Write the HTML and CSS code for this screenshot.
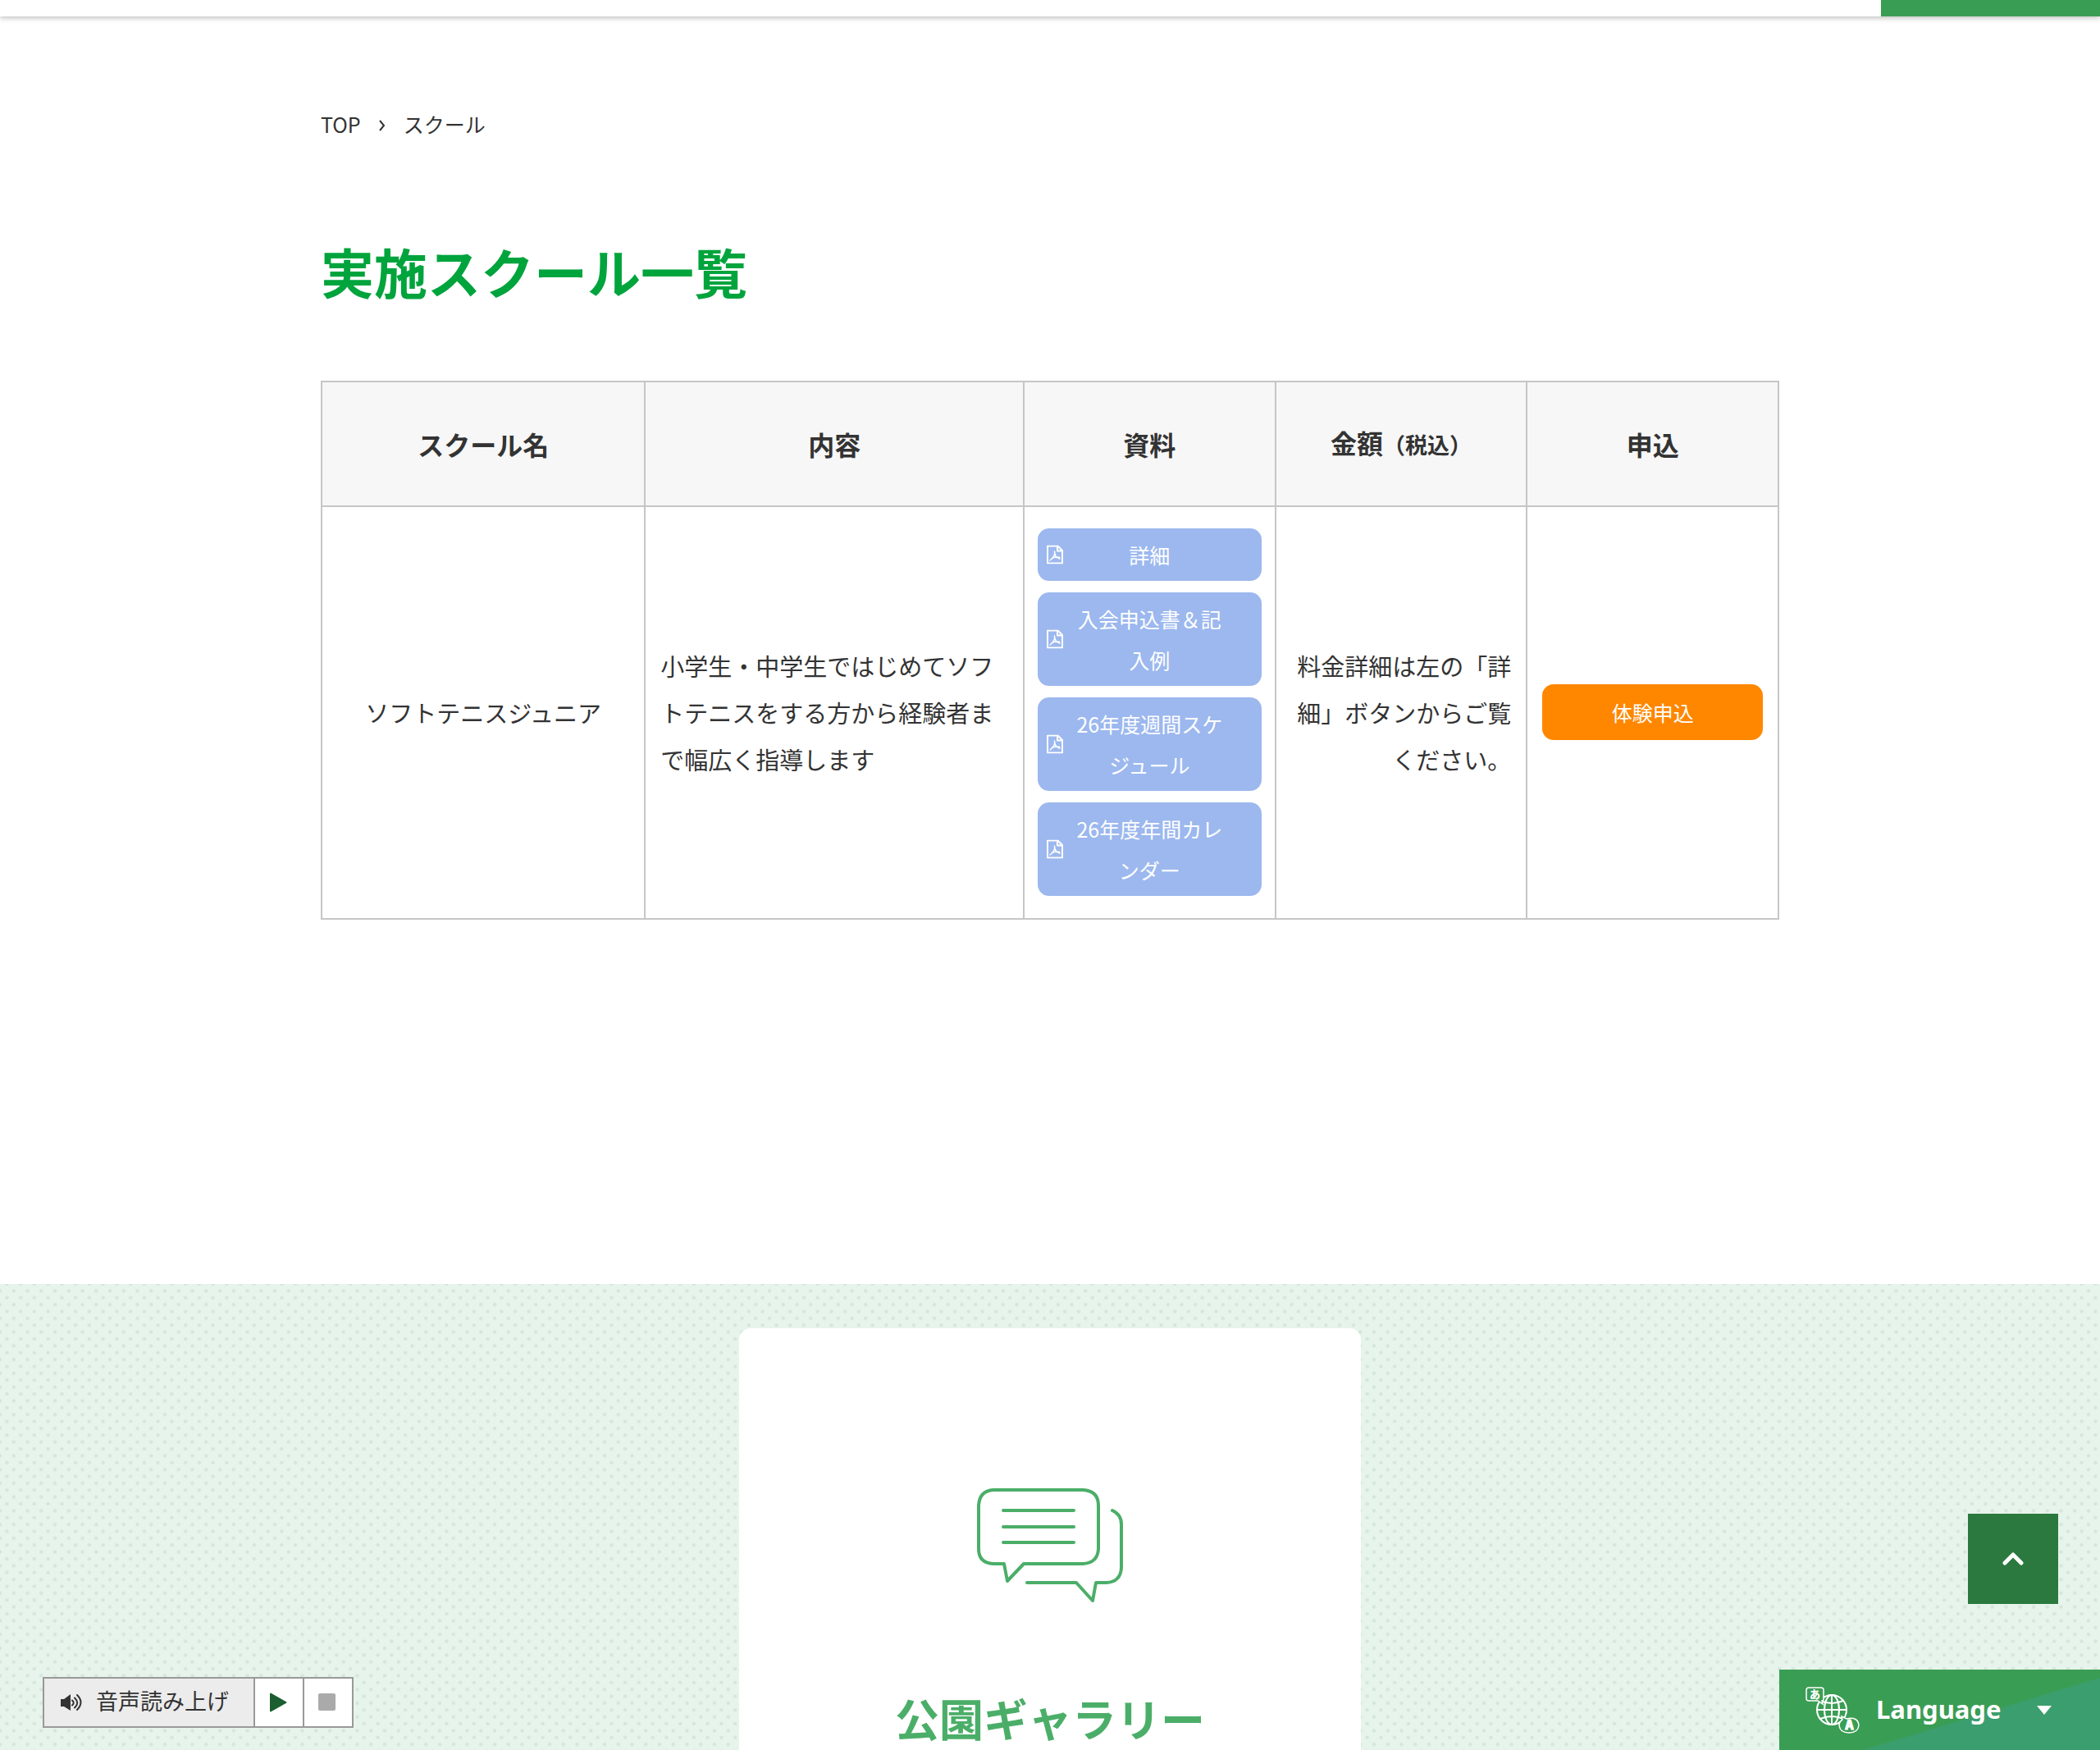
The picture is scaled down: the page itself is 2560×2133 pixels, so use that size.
FILE: index.html
```
<!DOCTYPE html>
<html lang="ja">
<head>
    <meta charset="UTF-8">
    <meta name="viewport" content="width=device-width, initial-scale=1.0">
    <title>スクール</title>
    <link rel="stylesheet" href="styles.css">
</head>
<body>
    <svg class="symbols" aria-hidden="true">
        <symbol id="icon-pdf" viewBox="0 0 20 23">
            <path d="M1 1h12.500l5.500 5.500V22H1z M13 1v6h6" fill="none" stroke="currentColor" stroke-width="2" stroke-linejoin="round"/>
            <path d="M9.500 7.500c.8 3-1 7.500-5.500 11 M9.500 8c.2 4 2.500 7.500 6.500 8.500 M6.500 16c2.500-1.500 5.500-2 9-1.200" fill="none" stroke="currentColor" stroke-width="1.500" stroke-linecap="round"/>
        </symbol>
    </svg>

    <header class="header">
        <div class="header-menu"></div>
    </header>

    <main class="main">
        <nav class="breadcrumb" aria-label="パンくず">
            <a href="#">TOP</a>
            <svg class="breadcrumb-arrow" viewBox="0 0 8 14" aria-hidden="true"><path d="M1 1l5 6-5 6"/></svg>
            <span>スクール</span>
        </nav>

        <h1 class="title">実施スクール一覧</h1>

        <table class="school">
            <thead>
                <tr>
                    <th class="col-name">スクール名</th>
                    <th class="col-text">内容</th>
                    <th>資料</th>
                    <th>金額<span class="tax">（税込）</span></th>
                    <th>申込</th>
                </tr>
            </thead>
            <tbody>
                <tr>
                    <td class="center">ソフトテニスジュニア</td>
                    <td>小学生・中学生ではじめてソフトテニスをする方から経験者まで幅広く指導します</td>
                    <td class="files-cell">
                        <div class="files">
                            <a class="btn btn-pdf" href="#"><svg aria-hidden="true"><use href="#icon-pdf"/></svg>詳細</a>
                            <a class="btn btn-pdf" href="#"><svg aria-hidden="true"><use href="#icon-pdf"/></svg>入会申込書＆記入例</a>
                            <a class="btn btn-pdf" href="#"><svg aria-hidden="true"><use href="#icon-pdf"/></svg>26年度週間スケジュール</a>
                            <a class="btn btn-pdf" href="#"><svg aria-hidden="true"><use href="#icon-pdf"/></svg>26年度年間カレンダー</a>
                        </div>
                    </td>
                    <td class="right">料金詳細は左の「詳細」ボタンからご覧ください。</td>
                    <td><a class="btn btn-apply" href="#">体験申込</a></td>
                </tr>
            </tbody>
        </table>
    </main>

    <section class="gallery">
        <a class="card" href="#">
            <svg class="card-icon" viewBox="0 0 178 139" aria-hidden="true">
                <path d="M20 2H129Q148 3 148 21V74Q147 91 129 92H57L37 113L33 92H20Q2 91 2 74V21Q3 3 20 2z"/>
                <path d="M32 27h86M32 47h86M32 66h86M165 27Q176 32 176 44V97Q175 114 158 115H145L141 137L121 115H61"/>
            </svg>
            <h2 class="card-title">公園ギャラリー</h2>
        </a>
    </section>

    <div class="voice">
        <span class="voice-label">
            <svg class="voice-icon" viewBox="0 0 27 22" aria-hidden="true">
                <path d="M0 7h4l8-6v20l-8-5H0z" fill="currentColor"/>
                <path d="M14 8.500q3.500 3 0 6M17 5.500q6.500 6 0 12M20 2q9 9 0 18" fill="none" stroke="currentColor" stroke-width="2" stroke-linecap="round"/>
            </svg>
            <span class="voice-text">音声読み上げ</span>
        </span>
        <button class="voice-btn" type="button" aria-label="再生">
            <svg viewBox="0 0 24 24"><path d="M2 1.500v21L20.500 12z" fill="#1b5e30" stroke="#1b5e30" stroke-width="2" stroke-linejoin="round"/></svg>
        </button>
        <button class="voice-btn" type="button" aria-label="停止">
            <svg viewBox="0 0 24 24"><rect x="0" y="1" width="21" height="21" rx="2" fill="#aaa"/></svg>
        </button>
    </div>

    <a class="pagetop" href="#" aria-label="ページの先頭へ">
        <svg viewBox="0 0 26 16" aria-hidden="true"><path d="M3 13L13 3l10 10"/></svg>
    </a>

    <button class="language" type="button">
        <svg class="language-icon" viewBox="0 0 66 58" aria-hidden="true">
            <g fill="none" stroke="#fff" stroke-width="2">
                <circle cx="32" cy="29" r="18"/>
                <ellipse cx="32" cy="29" rx="9" ry="18"/>
                <path d="M32 11v36M14 29h36M18 18q14 6 28 0M18 40q14-6 28 0"/>
            </g>
            <path d="M4 2h15q3 0 3 3v11q0 2-2 2l1 4-6-4H4q-3 0-3-3V5q0-3 3-3z" fill="#3a9d54" stroke="#fff" stroke-width="1.500"/>
            <path d="M44 37l6 3q14-3 15 8-1 9-12 9t-12-9q0-4 4-7z" fill="#3a9d54" stroke="#fff" stroke-width="1.500"/>
            <text x="11.500" y="15" class="language-mark">あ</text>
            <text x="53.500" y="53" class="language-mark language-mark-a">A</text>
        </svg>
        <span class="language-text">Language</span>
        <svg class="language-arrow" viewBox="0 0 18 11" aria-hidden="true"><path d="M0 0h18L9 11z" fill="#fff"/></svg>
    </button>
</body>
</html>
```
FILE: styles.css
```
* {
    box-sizing: border-box;
}
body {
    display: flex;
    flex-direction: column;
    min-height: 100vh;
    margin: 0;
    font-family: "Noto Sans CJK JP", sans-serif;
    font-size: 29px;
    line-height: 57px;
    color: #333;
    background-color: #fff;
}
a {
    color: inherit;
    text-decoration: none;
}
.symbols {
    position: absolute;
    width: 0;
    height: 0;
}

/* header */
.header {
    display: flex;
    justify-content: flex-end;
    height: 20px;
    background-color: #fff;
    box-shadow: 0 2px 6px rgba(0, 0, 0, 0.25);
}
.header-menu {
    width: 267px;
    background-color: #3a9d54;
}

/* main */
.main {
    width: 100%;
    max-width: 1818px;
    margin: 0 auto;
    padding: 106px 20px 444px;
}
.breadcrumb {
    display: flex;
    align-items: center;
    gap: 22px;
    font-size: 25px;
    line-height: 50px;
}
.breadcrumb-arrow {
    width: 8px;
    height: 14px;
    margin-top: 4px;
    fill: none;
    stroke: #333;
    stroke-width: 2;
}
.title {
    margin: 106px 0 86px;
    font-size: 65px;
    line-height: 96px;
    font-weight: 700;
    color: #00a43c;
}
.school {
    width: 100%;
    border-collapse: collapse;
    table-layout: fixed;
}
.school th,
.school td {
    border: 2px solid #c6c6c6;
    text-align: left;
}
.school th {
    padding: 41px 16px 42px;
    background-color: #f7f7f7;
    font-size: 32px;
    line-height: 64px;
    text-align: center;
}
.school td {
    padding: 26px 18px 27px;
}
.school .files-cell {
    padding-left: 16px;
    padding-right: 16px;
}
.school .col-name {
    width: 22.2%;
}
.school .col-text {
    width: 26%;
}
.school .center {
    text-align: center;
}
.school .right {
    text-align: right;
}
.tax {
    font-size: 27px;
}
.files {
    display: flex;
    flex-direction: column;
    gap: 14px;
}
.btn {
    position: relative;
    display: block;
    padding: 7px 42px;
    border-radius: 14px;
    font-size: 25px;
    line-height: 50px;
    text-align: center;
    color: #fff;
}
.btn-pdf {
    background-color: #9cb8ee;
}
.btn-pdf svg {
    position: absolute;
    top: 50%;
    left: 11px;
    width: 20px;
    height: 23px;
    transform: translateY(-50%);
}
.btn-apply {
    padding: 9px 16px;
    background-color: #ff8700;
}

/* gallery */
.gallery {
    display: flex;
    flex: 1;
    justify-content: center;
    padding-top: 54px;
    background-color: #e7f4eb;
    background-image: url("data:image/svg+xml,%3Csvg xmlns='http://www.w3.org/2000/svg' viewBox='0 0 64 64'%3E%3Cpattern id='p' width='16' height='16' patternUnits='userSpaceOnUse'%3E%3Cg fill='%23d5e6db'%3E%3Ccircle cx='0' cy='8' r='2.2'/%3E%3Ccircle cx='16' cy='8' r='2.2'/%3E%3Ccircle cx='8' cy='0' r='2.2'/%3E%3Ccircle cx='8' cy='16' r='2.2'/%3E%3C/g%3E%3C/pattern%3E%3Crect width='64' height='64' fill='url(%23p)'/%3E%3C/svg%3E");
    background-size: 67px 67px;
}
.card {
    display: flex;
    flex-direction: column;
    align-items: center;
    width: 758px;
    padding-top: 195px;
    border-radius: 14px 14px 0 0;
    background-color: #fff;
    color: #4bae68;
}
.card-icon {
    width: 178px;
    height: 139px;
    fill: none;
    stroke: #4bae68;
    stroke-width: 4;
    stroke-linecap: round;
    stroke-linejoin: round;
}
.card-title {
    margin: 106px 0 0;
    font-size: 54px;
    line-height: 70px;
    font-weight: 700;
}

/* fixed parts */
.voice {
    position: fixed;
    left: 52px;
    bottom: 27px;
    display: flex;
    height: 62px;
    border: 2px solid #999;
    background-color: #fff;
}
.voice-label {
    display: flex;
    align-items: center;
    gap: 16px;
    padding: 0 30px 0 20px;
    background-color: #ececec;
    font-size: 27px;
    line-height: 54px;
}
.voice-icon {
    width: 27px;
    height: 22px;
}
.voice-text {
    padding-bottom: 4px;
}
.voice-btn {
    display: flex;
    align-items: center;
    justify-content: center;
    width: 60px;
    padding: 0;
    border: 0;
    border-left: 2px solid #999;
    background-color: #fff;
}
.voice-btn svg {
    width: 24px;
    height: 24px;
}
.pagetop {
    position: fixed;
    right: 51px;
    bottom: 178px;
    display: flex;
    align-items: center;
    justify-content: center;
    width: 110px;
    height: 110px;
    background-color: #2b793e;
}
.pagetop svg {
    width: 26px;
    height: 16px;
    fill: none;
    stroke: #fff;
    stroke-width: 5;
    stroke-linecap: round;
    stroke-linejoin: round;
}
.language {
    position: fixed;
    right: 0;
    bottom: 0;
    display: flex;
    align-items: center;
    width: 391px;
    height: 98px;
    padding: 0 59px 0 32px;
    border: 0;
    background: linear-gradient(163deg, #3a9d54 59%, #3b9e6e 60%);
    color: #fff;
}
.language-icon {
    width: 66px;
    height: 58px;
}
.language-mark {
    font-family: "Noto Sans CJK JP", sans-serif;
    font-size: 13px;
    font-weight: 900;
    text-anchor: middle;
    fill: #fff;
}
.language-mark-a {
    font-size: 15px;
    stroke: #fff;
    stroke-width: 1;
}
.language-text {
    margin-left: 20px;
    padding-bottom: 3px;
    font-family: "Noto Sans", sans-serif;
    font-size: 31px;
    line-height: 40px;
    font-weight: 700;
}
.language-arrow {
    width: 18px;
    height: 11px;
    margin-left: auto;
}
```
